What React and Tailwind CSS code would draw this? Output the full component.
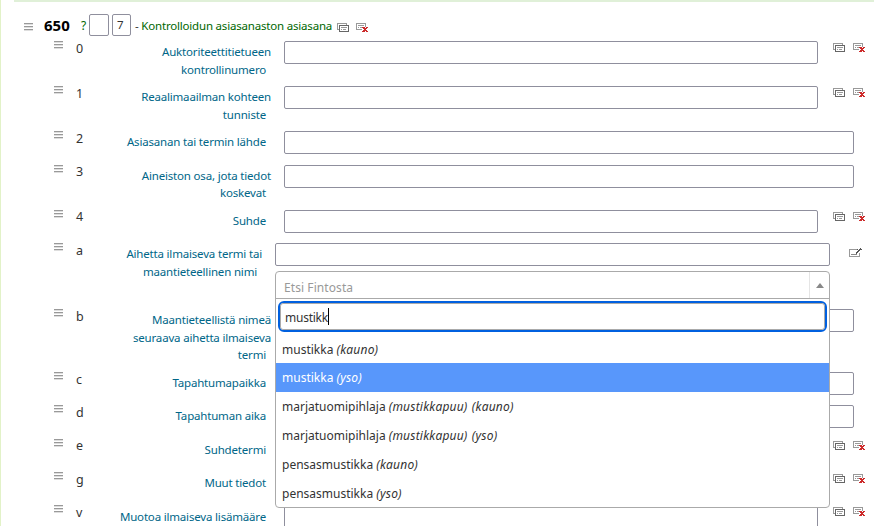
import React from "react";

const rows = [
  { code: "0", h: "h-[45px]", lines: ["Auktoriteettitietueen", "kontrollinumero"], kind: "repeat" },
  { code: "1", h: "h-[45px]", lines: ["Reaalimaailman kohteen", "tunniste"], kind: "repeat" },
  { code: "2", h: "h-[34px]", lines: ["Asiasanan tai termin lähde"], kind: "single" },
  { code: "3", h: "h-[45px]", lines: ["Aineiston osa, jota tiedot", "koskevat"], kind: "single", codePad: "pt-[3px]", leading: "leading-[17.4px]" },
  { code: "4", h: "h-[33px]", lines: ["Suhde"], kind: "repeat", codePad: "pt-[3px]" },
  { code: "a", h: "h-[66px]", lines: ["Aihetta ilmaiseva termi tai", "maantieteellinen nimi"], kind: "term" },
  { code: "b", h: "h-[63px]", lines: ["Maantieteellistä nimeä", "seuraava aihetta ilmaiseva", "termi"], kind: "single", leading: "leading-[17.5px]" },
  { code: "c", h: "h-[33px]", lines: ["Tapahtumapaikka"], kind: "single" },
  { code: "d", h: "h-[34px]", lines: ["Tapahtuman aika"], kind: "single" },
  { code: "e", h: "h-[33px]", lines: ["Suhdetermi"], kind: "repeat", codePad: "pt-[3px]" },
  { code: "g", h: "h-[33px]", lines: ["Muut tiedot"], kind: "repeat" },
  { code: "v", h: "h-[34px]", lines: ["Muotoa ilmaiseva lisämääre"], kind: "repeat", leading: "leading-[20px]" },
];

const options = [
  ["mustikka", "(kauno)"],
  ["mustikka", "(yso)"],
  ["marjatuomipihlaja", "(mustikkapuu) (kauno)"],
  ["marjatuomipihlaja", "(mustikkapuu) (yso)"],
  ["pensasmustikka", "(kauno)"],
  ["pensasmustikka", "(yso)"],
];

function Handle() {
  return (
    <svg width="9" height="8" viewBox="0 0 9 8" shapeRendering="crispEdges" className="block shrink-0">
      <path d="M0 0h9v1H0zM0 3h9v1H0zM0 6h9v1H0z" fill="#999" />
      <path d="M0 1h9v1H0zM0 4h9v1H0zM0 7h9v1H0z" fill="#dedede" />
    </svg>
  );
}

function CopyIcon() {
  return (
    <svg width="12" height="9" viewBox="0 0 12 9" shapeRendering="crispEdges" className="block shrink-0">
      <path d="M0 0h10v2H9V1H1v5h1v1H0z" fill="#999" />
      <path d="M2 2h10v7H2zM3 3v5h8V3z" fillRule="evenodd" fill="#666" />
      <path d="M4 4h6v1H4zM4 6h1v1H4zM6 6h3v1H6z" fill="#999" />
    </svg>
  );
}

function DeleteIcon() {
  return (
    <svg width="12" height="9" viewBox="0 0 12 9" shapeRendering="crispEdges" className="block shrink-0">
      <path d="M0 0h10v4H9V1H1v5h5v1H0z" fill="#999" />
      <path d="M2 2h6v1H2zM2 4h1v1H2zM4 4h2v1H4z" fill="#999" />
      <path d="M6 4h3v1H6zM10 4h2v1h-2zM7 5h4v1H7zM8 6h2v1H8zM7 7h4v1H7zM6 8h3v1H6zM10 8h2v1h-2z" fill="#cc2a2a" />
    </svg>
  );
}

function EditIcon() {
  return (
    <svg width="13" height="9" viewBox="0 0 13 9" shapeRendering="crispEdges" className="block">
      <path d="M0 1h8v1H1v6h9V5h1v4H0z" fill="#999" />
      <path d="M2 6h6v1H2z" fill="#888" />
      <path d="M11 0h1v1h-1zM10 1h2v1h-2zM9 2h2v1H9zM8 3h2v1H8zM7 4h2v1H7zM7 5h1v1H7zM12 1h1v1h-1zM8 1h1v1H8z" fill="#555" />
    </svg>
  );
}

function Picker() {
  return (
    <div className="absolute left-0 top-[28px] z-10 h-[237px] w-[555px] overflow-hidden rounded-[4px] border border-[#aaa] bg-white">
      <div className="flex h-[27px] items-stretch border-b border-[#aaa]">
        <div className="flex-1 pl-[8px] pt-[4px] text-[12px] leading-[23px] tracking-[0.08px] text-[#999]">Etsi Fintosta</div>
        <div className="flex w-[20px] items-center justify-center border-l border-[#e5e5e5]">
          <svg width="8" height="5" viewBox="0 0 8 5" className="block">
            <path d="M4 0L8 5H0z" fill="#888" />
          </svg>
        </div>
      </div>
      <div className="h-[37px] px-[2px] pt-[2px]">
        <div className="h-[31px] rounded-[6px] border-2 border-[#0060df]">
          <div className="flex h-full items-center rounded-[3px] border border-[#aaa] pl-[4px] text-[12px] tracking-[-0.25px] text-[#333]">
            <span className="pt-[2px]">mustikk</span>
            <span className="h-[17px] w-px bg-black" />
          </div>
        </div>
      </div>
      <div className="text-[12px] leading-[29px] text-[#333]">
        {options.map(([term, source], i) => (
          <div
            key={i}
            className={i === 1 ? "h-[29px] bg-[#5897fb] pl-[6px] text-white" : i === 0 ? "h-[27px] pl-[6px] leading-[28px]" : "h-[29px] pl-[6px]"}
          >
            {term} <i className="tracking-[0.2px] [word-spacing:1px]">{source}</i>
          </div>
        ))}
      </div>
    </div>
  );
}

function Row({ code, h, lines, kind, codePad = "pt-[4px]", leading = "leading-[18px]" }) {
  const term = kind === "term";
  return (
    <div className={`${h} flex shrink-0 items-start pl-[53px]`}>
      <div className="w-[22px] pt-[5px]"><Handle /></div>
      <div className={`w-[20px] text-[12.5px] leading-[18px] text-[#333] ${codePad}`}>{code}</div>
      <div className={`${term ? "w-[166px]" : "w-[175px]"} pt-[7px] text-right text-[11.5px] tracking-[-0.18px] text-[#006688] ${leading}`}>
        {lines.map((line, i) => (
          <div key={line} className={`whitespace-nowrap ${i === lines.length - 1 ? "pr-[5px]" : ""}`}>{line}</div>
        ))}
      </div>
      <div className={`relative ml-[13px] shrink-0 pt-[5px] ${term ? "w-[555px]" : kind === "repeat" ? "w-[534px]" : "w-[570px]"}`}>
        <div className="h-[23px] rounded-[2px] border border-[#8f8f9d] bg-white" />
        {term && <div className="relative"><div className="absolute -top-[23px] left-0"><Picker /></div></div>}
      </div>
      {kind === "repeat" && (
        <div className="flex gap-[8px] pl-[15px] pt-[7px]">
          <CopyIcon />
          <DeleteIcon />
        </div>
      )}
      {term && <div className="pl-[19px] pt-[10px]"><EditIcon /></div>}
    </div>
  );
}

export default function App() {
  return (
    <div className="h-[526px] w-[884px] overflow-hidden border-l border-[#e2f2c8] bg-white font-['Noto_Sans',sans-serif]">
      <div className="ml-[13px] h-[2px] w-[860px] bg-[#e0f0d8]" />
      <div className="flex h-[34px] items-start pl-[23px] pt-[12px]">
        <div className="w-[20px] pt-[9px]"><Handle /></div>
        <div className="w-[37px] text-[15px] font-bold leading-[22px] text-black">650</div>
        <div className="w-[8px] text-[12px] leading-[24px] text-[#006600]">?</div>
        <div className="h-[22px] w-[20px] rounded-[2px] border border-[#8f8f9d]" />
        <div className="ml-[3px] h-[22px] w-[19px] rounded-[2px] border border-[#8f8f9d] pl-[4px] text-[11.5px] leading-[20px] text-[#333]">7</div>
        <div className="ml-[4px] w-[202px] whitespace-nowrap text-[11.5px] leading-[24px] tracking-[-0.19px] text-[#006600]">
          <span className="text-[#333]">-</span> Kontrolloidun asiasanaston asiasana
        </div>
        <div className="flex gap-[7px] pt-[9px]"><CopyIcon /><DeleteIcon /></div>
      </div>
      <div className="flex flex-col">
        {rows.map((row) => <Row key={row.code} {...row} />)}
      </div>
    </div>
  );
}
